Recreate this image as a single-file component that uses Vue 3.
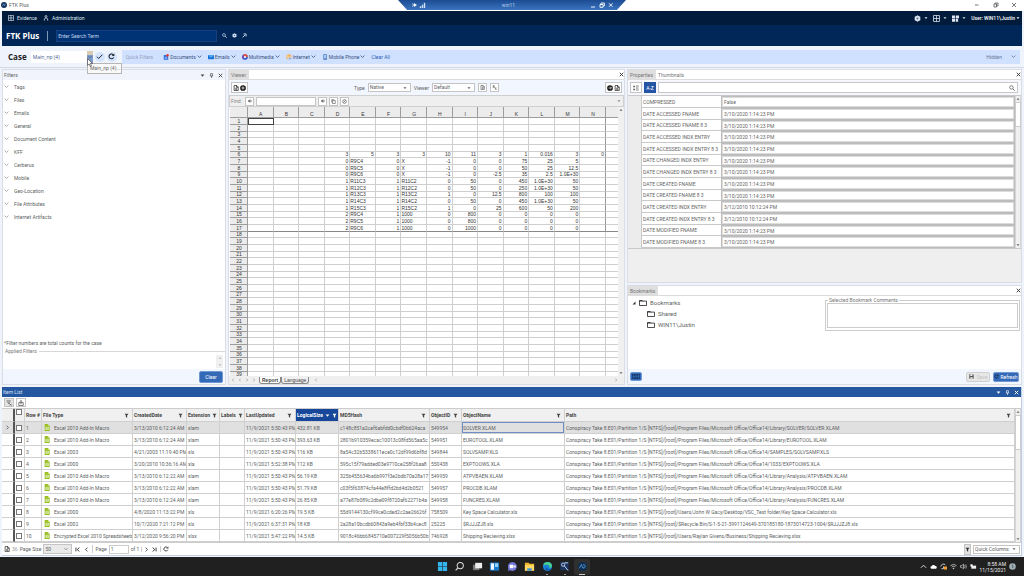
<script setup>
import { ref } from 'vue'

const filters = ['Tags', 'Files', 'Emails', 'General', 'Document Content', 'KFF', 'Cerberus', 'Mobile', 'Geo-Location', 'File Attributes', 'Internet Artifacts']
const quick = [
  { name: 'Documents', icon: 'docs' },
  { name: 'Emails', icon: 'mail' },
  { name: 'Multimedia', icon: 'media' },
  { name: 'Internet', icon: 'globe' },
  { name: 'Mobile Phone', icon: 'phone' },
]
const caseName = ref('Main_np (4)')
const page = ref('1')
const letters = 'ABCDEFGHIJKLMN'.split('')
const cells = {
  6: ['3', '5', '3', '3', '10', '11', '3', '1', '0.016', '3', '0'],
  7: ['0', 'R9C4', '0', 'X', '-1', '0', '0', '75', '25', '5', ''],
  8: ['0', 'R9C5', '0', 'X', '-1', '0', '0', '50', '25', '12.5', ''],
  9: ['0', 'R9C6', '0', 'X', '-1', '0', '-2.5', '35', '2.5', '1.0E+30', ''],
  10: ['1', 'R11C3', '1', 'R11C2', '0', '50', '0', '450', '1.0E+30', '50', ''],
  11: ['1', 'R12C3', '1', 'R12C2', '0', '50', '0', '250', '1.0E+30', '50', ''],
  12: ['1', 'R13C3', '1', 'R13C2', '1', '0', '12.5', '800', '100', '100', ''],
  13: ['1', 'R14C3', '1', 'R14C2', '0', '50', '0', '450', '1.0E+30', '50', ''],
  14: ['1', 'R15C3', '1', 'R15C2', '1', '0', '25', '600', '50', '200', ''],
  15: ['2', 'R9C4', '1', '1000', '0', '800', '0', '0', '0', '0', ''],
  16: ['2', 'R9C5', '1', '1000', '0', '800', '0', '0', '0', '0', ''],
  17: ['2', 'R9C6', '1', '1000', '0', '1000', '0', '0', '0', '0', ''],
}
const cell = (r, c) => (cells[r] && c > 2 ? cells[r][c - 3] : '')
const isText = (r, c) => r > 6 && (c === 4 || c === 6)

const d1 = '3/10/2020 1:14:23 PM'
const d2 = '3/12/2010 10:12:24 PM'
const props = [
  ['COMPRESSED', 'False'],
  ['DATE ACCESSED FNAME', d1],
  ['DATE ACCESSED FNAME 8 3', d1],
  ['DATE ACCESSED INDX ENTRY', d1],
  ['DATE ACCESSED INDX ENTRY 8 3', d1],
  ['DATE CHANGED INDX ENTRY', d1],
  ['DATE CHANGED INDX ENTRY 8 3', d1],
  ['DATE CREATED FNAME', d1],
  ['DATE CREATED FNAME 8 3', d1],
  ['DATE CREATED INDX ENTRY', d2],
  ['DATE CREATED INDX ENTRY 8 3', d2],
  ['DATE MODIFIED FNAME', d1],
  ['DATE MODIFIED FNAME 8 3', d1],
]

const cols = [
  { t: 'Row #', c: 'w-row', f: false },
  { t: 'File Type', c: 'w-type', f: true },
  { t: 'CreatedDate', c: 'w-created', f: true },
  { t: 'Extension', c: 'w-ext', f: true },
  { t: 'Labels', c: 'w-labels', f: true },
  { t: 'LastUpdated', c: 'w-updated', f: true },
  { t: 'LogicalSize', c: 'w-size', f: true, sorted: true },
  { t: 'MD5Hash', c: 'w-md5', f: true },
  { t: 'ObjectID', c: 'w-id', f: true },
  { t: 'ObjectName', c: 'w-name', f: true },
  { t: 'Path', c: 'w-path', f: true },
]
const root = 'Conspiracy Take 8.E01/Partition 1/S [NTFS]/[root]/'
const office = root + 'Program Files/Microsoft Office/Office14/'
const items = [
  ['Excel 2010 Add-In Macro', '3/13/2010 6:12:24 AM', 'xlam', '11/9/2021 5:50:43 PM', '432.81 KB', 'c148c851a2cef6abfdd0cbdf0b624aca', '549954', 'SOLVER.XLAM', office + 'Library/SOLVER/SOLVER.XLAM'],
  ['Excel 2010 Add-In Macro', '3/13/2010 6:12:24 AM', 'xlam', '11/9/2021 5:50:43 PM', '393.63 KB', '2801b910359ecac10013c08fd565aa5c', '549951', 'EUROTOOL.XLAM', office + 'Library/EUROTOOL.XLAM'],
  ['Excel 2003', '4/21/2003 11:19:40 PM', 'xls', '11/9/2021 5:50:43 PM', '116 KB', '8a54c32b5338611ece0c12df99d6bf8d', '549844', 'SOLVSAMP.XLS', office + 'SAMPLES/SOLVSAMP.XLS'],
  ['Excel 2000', '3/20/2010 10:36:16 AM', 'xla', '11/9/2021 5:52:38 PM', '112 KB', '595c15f79added03e9710ce258f26aa8', '550438', 'EXPTOOWS.XLA', office + '1033/EXPTOOWS.XLA'],
  ['Excel 2010 Add-In Macro', '3/13/2010 6:12:22 AM', 'xlam', '11/9/2021 5:50:43 PM', '56.19 KB', '325b455634ba6b997f3e2bdb70a28a17', '549959', 'ATPVBAEN.XLAM', office + 'Library/Analysis/ATPVBAEN.XLAM'],
  ['Excel 2010 Add-In Macro', '3/13/2010 6:12:22 AM', 'xlam', '11/9/2021 5:50:43 PM', '51.79 KB', 'c03f5f63874cfa44e8ffd2bd4d2b0521', '549957', 'PROCDB.XLAM', office + 'Library/Analysis/PROCDB.XLAM'],
  ['Excel 2010 Add-In Macro', '3/13/2010 6:12:24 AM', 'xlam', '11/9/2021 5:50:43 PM', '26.85 KB', 'a77e87b089c2dbe09f8720af62271b4a', '549958', 'FUNCRES.XLAM', office + 'Library/Analysis/FUNCRES.XLAM'],
  ['Excel 2000', '4/8/2020 11:13:22 PM', 'xls', '11/9/2021 6:20:26 PM', '19.5 KB', '55d9144130cf99ce0cded2c2ae26626f', '758509', 'Key Space Calculator.xls', root + 'Users/John W Gacy/Desktop/VSC_Test folder/Key Space Calculator.xls'],
  ['Excel 2002', '10/7/2020 7:21:12 PM', 'xls', '11/9/2021 6:37:31 PM', '18 KB', '2a28a10bcdb60843a9eb4fbf33b4cec8', '25225', '$RJJJZJ8.xls', root + '$Recycle.Bin/S-1-5-21-3991124649-370185180-1873014723-1004/$RJJJZJ8.xls'],
  ['Encrypted Excel 2010 Spreadsheets', '3/12/2020 9:56:20 PM', 'xlsx', '11/9/2021 5:47:22 PM', '14.5 KB', '9018c46bb6845710e007229f5056b50b', '746928', 'Shipping Recieving.xlsx', root + 'Users/Raylan Givens/Business/Shipping Recieving.xlsx'],
]
</script>

<template>
  <div class="screen">
    <svg class="defs" aria-hidden="true">
      <symbol id="chev" viewBox="0 0 8 8"><path d="M1 2.5 4 5.5 7 2.5" fill="none" stroke="currentColor" stroke-width="1.3" /></symbol>
      <symbol id="left" viewBox="0 0 8 8"><path d="M5.5 1 2.5 4 5.5 7" fill="none" stroke="currentColor" stroke-width="1.4" /></symbol>
      <symbol id="right" viewBox="0 0 8 8"><path d="M2.5 1 5.5 4 2.5 7" fill="none" stroke="currentColor" stroke-width="1.4" /></symbol>
      <symbol id="first" viewBox="0 0 8 8"><path d="M1.5 1V7M7 1 3.5 4 7 7" fill="none" stroke="currentColor" stroke-width="1.5" /></symbol>
      <symbol id="last" viewBox="0 0 8 8"><path d="M6.5 1V7M1 1 4.5 4 1 7" fill="none" stroke="currentColor" stroke-width="1.5" /></symbol>
      <symbol id="back" viewBox="0 0 8 8"><path d="M7.5 4H1M4 1 1 4 4 7" fill="none" stroke="currentColor" stroke-width="1.8" /></symbol>
      <symbol id="down" viewBox="0 0 8 8"><path d="M1 2.5H7L4 6Z" fill="currentColor" /></symbol>
      <symbol id="up" viewBox="0 0 8 8"><path d="M1 5.5H7L4 2Z" fill="currentColor" /></symbol>
      <symbol id="caret" viewBox="0 0 8 8"><path d="M1 5.5 4 2.5 7 5.5" fill="none" stroke="currentColor" stroke-width="1.1" /></symbol>
      <symbol id="x" viewBox="0 0 8 8"><path d="M1.2 1.2 6.8 6.8M6.8 1.2 1.2 6.8" stroke="currentColor" stroke-width="1.5" /></symbol>
      <symbol id="pin" viewBox="0 0 8 8"><path d="M2.5 1H5.5V4.5M2.5 1V4.5M1.3 4.7H6.7M4 4.7V8" fill="none" stroke="currentColor" stroke-width="1" /></symbol>
      <symbol id="check" viewBox="0 0 8 8"><path d="M1 4.3 3 6.3 7.2 2" fill="none" stroke="currentColor" stroke-width="1.1" /></symbol>
      <symbol id="reload" viewBox="0 0 8 8"><path d="M6.4 5A2.7 2.7 0 1 1 6 2.2" fill="none" stroke="currentColor" stroke-width="1.2" /><path d="M7.2 .6V3.4H4.4Z" fill="currentColor" /></symbol>
      <symbol id="search" viewBox="0 0 8 8"><circle cx="3.2" cy="3.2" r="2.3" fill="none" stroke="currentColor" /><path d="M5 5 7.5 7.5" stroke="currentColor" stroke-width="1.3" /></symbol>
      <symbol id="doc" viewBox="0 0 8 8"><path d="M1.5 .7H5L7 2.7V7.3H1.5ZM4.7 .7V3H7M3 4.3H5.5M3 5.8H5.5" fill="none" stroke="currentColor" stroke-width=".9" /></symbol>
      <symbol id="plus" viewBox="0 0 8 8"><circle cx="4" cy="4" r="3.8" fill="currentColor" /><path d="M4 1.8V6.2M1.8 4H6.2" stroke="#fff" stroke-width="1" /></symbol>
      <symbol id="arrowc" viewBox="0 0 8 8"><circle cx="4" cy="4" r="3.8" fill="currentColor" /><path d="M1.8 4H6M4.2 2.2 6 4 4.2 5.8" fill="none" stroke="#fff" stroke-width=".9" /></symbol>
      <symbol id="funnel" viewBox="0 0 8 8"><path d="M.8 1H7.2L5 4V7.5L3 6.5V4Z" fill="currentColor" /></symbol>
      <symbol id="folder" viewBox="0 0 16 12"><path d="M1 2.2H15V11H1ZM1 3V1H6.5L8 2.5" fill="none" stroke="currentColor" stroke-width="1.6" /></symbol>
      <symbol id="grid" viewBox="0 0 8 8"><path d="M.6 .6H7.4V7.4H.6ZM4 .6V7.4M.6 4H7.4" fill="none" stroke="currentColor" stroke-width=".9" /></symbol>
      <symbol id="tiles" viewBox="0 0 8 8"><path d="M0 .5H3.6V3.7H0ZM4.4 .5H8V3.7H4.4ZM0 4.4H3.6V7.6H0ZM4.4 4.4H7V7.6H4.4Z" fill="currentColor" /></symbol>
      <symbol id="gear" viewBox="0 0 8 8"><path d="M4 .3 5.3 1.2 7.2 2V6L5.3 6.8 4 7.7 2.7 6.8 .8 6V2L2.7 1.2Z" fill="currentColor" /><circle cx="4" cy="4" r="1.2" fill="#5d7390" /></symbol>
      <symbol id="copy" viewBox="0 0 8 8"><path d="M2.5 2.5H6.8V7.3H2.5ZM1.2 5.5V1H5" fill="none" stroke="currentColor" stroke-width=".9" /></symbol>
      <symbol id="ban" viewBox="0 0 8 8"><circle cx="4" cy="4" r="2.9" fill="none" stroke="currentColor" /><path d="M2.5 5.5 5.5 2.5" stroke="currentColor" /></symbol>
      <symbol id="swap" viewBox="0 0 8 8"><path d="M1 1.5H4.5M2.7 .5V3.5M1 5 3 2.5M3.5 3.5 7 7.3M4.5 6.5H7M5.5 3.5 7 5" fill="none" stroke="currentColor" stroke-width=".9" /></symbol>
      <symbol id="list" viewBox="0 0 8 8"><path d="M.5 1H2.5V3H.5ZM.5 5H2.5V7H.5Z" fill="currentColor" /><path d="M4 1.2H7.5M4 2.8H7.5M4 5.2H7.5M4 6.8H7.5" stroke="currentColor" stroke-width=".7" /></symbol>
      <symbol id="filterx" viewBox="0 0 8 8"><path d="M.5 1.2H6.5M1.5 3H5.5M2.7 4.8H5M5 5 7.5 7.5M7.5 5 5 7.5" fill="none" stroke="currentColor" stroke-width=".8" /></symbol>
      <symbol id="export" viewBox="0 0 8 8"><path d="M1 3.5H7V7.3H1ZM4 5.5V.8M2.5 2.2 4 .7 5.5 2.2" fill="none" stroke="currentColor" stroke-width=".9" /></symbol>
      <symbol id="docs" viewBox="0 0 8 8"><path d="M1 1.2H4.5L7 3.4V7.6H1Z" fill="#2f6fe0" /><path d="M2.3 4.3H5.6M2.3 5.8H5.6" stroke="#dfeaff" stroke-width=".7" /><circle cx="6" cy="1.8" r="1.7" fill="#e33b32" /></symbol>
      <symbol id="mail" viewBox="0 0 8 8"><rect y="1.2" width="8" height="5.8" rx=".6" fill="#1976d8" /><path d="M0 1.5 4 4.8 8 1.5" fill="#63b4f4" /></symbol>
      <symbol id="media" viewBox="0 0 8 8"><circle cx="4" cy="4" r="3.8" fill="#4263c9" /><path d="M4 4 1.3 1.3A3.8 3.8 0 0 1 7.8 4Z" fill="#e3523c" /><path d="M4 4 1 6.3A3.8 3.8 0 0 1 1.3 1.3Z" fill="#7a4bb0" /><circle cx="4" cy="4" r="1.4" fill="#fff" /></symbol>
      <symbol id="globe" viewBox="0 0 8 8"><circle cx="3.8" cy="4" r="3.6" fill="#f5a742" /><path d="M.4 3H7M2.6 .8Q1.5 4 2.6 7.2M3 4.5H7.8V7.8H3Z" fill="#8cb7ee" stroke="#fff" stroke-width=".5" /></symbol>
      <symbol id="phone" viewBox="0 0 8 8"><rect x="1.8" y=".3" width="4.8" height="7.4" rx=".7" fill="#3f6fb5" /><rect x="2.5" y="1.2" width="3.4" height="4.8" fill="#a9c9f3" /></symbol>
      <symbol id="xls" viewBox="0 0 10 12"><path d="M1 0H6.5L9.5 3V12H1Z" fill="#98bf1f" /><path d="M6.5 0 9.5 3H6.5Z" fill="#d8e8a0" /><path d="M3 5.5H7.5V9.5H3ZM3 7.5H7.5" fill="none" stroke="#fff" stroke-width=".9" /></symbol>
    </svg>

    <header class="titlebar">
      <svg class="logo" viewBox="0 0 8 8"><circle cx="4" cy="4" r="4" fill="#12335e" /><path d="M1.8 5.5 3.6 2.3 5 5.5M5 3H6.4" fill="none" stroke="#8fb4e0" stroke-width=".8" /></svg>
      <span>FTK Plus</span>
      <div class="rdp">
        <svg class="rdp-l" viewBox="0 0 14 6"><path d="M0 1V5M1 3H4M2 1.5 4.5 3 2 4.5Z" fill="#fff" stroke="#fff" stroke-width=".6" /><path d="M8 6V4.5H9V6ZM10 6V3H11V6ZM12 6V1H13V6Z" fill="#d4e2f5" stroke="#d4e2f5" stroke-width=".4" /></svg>
        <span>win11</span>
        <svg class="rdp-r" viewBox="0 0 22 6"><path d="M0 5H4M9 2.5H12V5.3H9ZM10 2.3V1H13.3V4H12M18 1.3 21.5 4.8M21.5 1.3 18 4.8" fill="none" stroke="#fff" stroke-width=".9" /></svg>
      </div>
      <svg class="winbtns" viewBox="0 0 42 6"><path d="M1 3H4.5M20 2H22.5V5H20ZM21 2V1H24V4H22.5M38 1 42 5M42 1 38 5" fill="none" stroke="#555" stroke-width=".8" /></svg>
    </header>

    <nav class="menubar">
      <a href="#"><svg class="i6"><use href="#grid" /></svg>Evidence</a>
      <a href="#"><svg class="i6" viewBox="0 0 8 8"><circle cx="4" cy="2" r="1.3" fill="none" stroke="currentColor" /><path d="M1.8 7.5V5L4 3.8 6.2 5V7.5" fill="none" stroke="currentColor" /></svg>Administration</a>
      <div class="menu-right">
        <button aria-label="Settings"><svg class="i7"><use href="#gear" /></svg><svg class="i4"><use href="#down" /></svg></button>
        <button aria-label="Layout"><svg class="i7"><use href="#grid" /></svg><svg class="i4"><use href="#down" /></svg></button>
        <button aria-label="Tiles"><svg class="i7"><use href="#tiles" /></svg><svg class="i4"><use href="#down" /></svg></button>
        <button class="user">User: WIN11\Justin<svg class="i4"><use href="#down" /></svg></button>
      </div>
    </nav>

    <div class="brandbar">
      <h1>FTK Plus</h1>
      <i class="bar"></i>
      <input class="term" aria-label="Search term" placeholder="Enter Search Term" />
      <button aria-label="Search"><svg class="i5"><use href="#search" /></svg></button>
      <button aria-label="Options"><svg class="i5"><use href="#gear" /></svg></button>
      <button aria-label="Open"><svg class="i5" viewBox="0 0 8 8"><path d="M1 7 5 3M2.5 1.5H6.5V5.5" fill="none" stroke="currentColor" stroke-width="1.5" /></svg></button>
    </div>

    <div class="casebar">
      <label class="case-label" for="case">Case</label>
      <input id="case" v-model="caseName" />
      <button class="case-drop" aria-label="Choose case"><svg class="i4"><use href="#chev" /></svg></button>
      <button class="round" aria-label="Apply"><svg class="i7"><use href="#check" /></svg></button>
      <button class="round" aria-label="Reload"><svg class="i7"><use href="#reload" /></svg></button>
      <div class="quick">
        <span class="quick-title">Quick Filters</span>
        <button v-for="q in quick" :key="q.name"><svg class="i6"><use :href="'#' + q.icon" /></svg>{{ q.name }}<svg class="i5"><use href="#chev" /></svg></button>
        <a href="#">Clear All</a>
        <button class="hidden-btn">Hidden<svg class="i5"><use href="#chev" /></svg></button>
      </div>
      <div class="tooltip">Main_np (4)...</div>
      <svg class="cursor" viewBox="0 0 6 9"><path d="M.5 .5V7.5L2.2 6 3.3 8.5 4.4 8 3.4 5.5H5.5Z" fill="#fff" stroke="#333" stroke-width=".6" /></svg>
    </div>

    <main class="work">
      <section class="panel filters">
        <div class="panel-head"><span>Filters</span>
          <div class="head-icons"><svg class="i5"><use href="#down" /></svg><svg class="i5"><use href="#pin" /></svg><svg class="i5"><use href="#x" /></svg></div>
        </div>
        <ul class="flist"><li v-for="f in filters" :key="f"><button><svg class="i5"><use href="#chev" /></svg>{{ f }}</button></li></ul>
        <p class="note">*Filter numbers are total counts for the case</p>
        <fieldset class="applied"><legend>Applied Filters</legend><div class="updown"><svg class="i4"><use href="#up" /></svg><svg class="i4"><use href="#down" /></svg></div></fieldset>
        <div class="panel-foot"><button class="primary clear">Clear</button></div>
      </section>

      <section class="panel viewer">
        <div class="tabs"><button class="tab on">Viewer</button><svg class="i5 close"><use href="#x" /></svg></div>
        <div class="vtools">
          <button class="box wide" aria-label="Add"><svg class="i6"><use href="#doc" /></svg><svg class="i6"><use href="#plus" /></svg></button>
          <div class="vmid">
            <label for="type">Type</label>
            <span class="sel"><select id="type"><option>Native</option></select><svg class="i4"><use href="#down" /></svg></span>
            <label for="view">Viewer</label>
            <span class="sel"><select id="view"><option>Default</option></select><svg class="i4"><use href="#down" /></svg></span>
            <button class="box" aria-label="Document"><svg class="i5"><use href="#doc" /></svg></button>
            <button class="box" aria-label="Translate"><svg class="i5"><use href="#swap" /></svg></button>
          </div>
          <button class="box wide" aria-label="Send"><svg class="i6"><use href="#arrowc" /></svg><svg class="i6"><use href="#doc" /></svg></button>
        </div>
        <div class="find">
          <label for="find">Find:</label>
          <button class="box" aria-label="Previous"><svg class="i4"><use href="#back" /></svg></button>
          <input id="find" />
          <button class="box" aria-label="Next"><svg class="i4"><use href="#back" /></svg></button>
          <button class="box" aria-label="Copy"><svg class="i5"><use href="#copy" /></svg></button>
          <button class="box" aria-label="Stop"><svg class="i5"><use href="#ban" /></svg></button>
          <svg class="i4 more"><use href="#down" /></svg>
        </div>
        <div class="sheetwrap">
          <div class="sheetclip">
            <table class="sheet">
              <thead><tr><th class="rh"></th><th v-for="l in letters" :key="l">{{ l }}</th><th class="tail"></th></tr></thead>
              <tbody>
                <tr v-for="r in 39" :key="r" :class="{ end: r === 17 }">
                  <th>{{ r }}</th>
                  <td v-for="(l, c) in letters" :key="l" :class="{ txt: isText(r, c), cur: r === 1 && c === 0, edge: c === 13 && r < 18 }">{{ cell(r, c) }}</td>
                  <td class="tail"></td>
                </tr>
              </tbody>
            </table>
          </div>
          <div class="vscroll plain"><svg class="i4"><use href="#up" /></svg><svg class="i4"><use href="#down" /></svg></div>
        </div>
        <div class="sheettabs">
          <svg class="i4"><use href="#left" /></svg><svg class="i4"><use href="#left" /></svg><svg class="i4"><use href="#right" /></svg><svg class="i4"><use href="#right" /></svg>
          <button class="stab on">Report</button><button class="stab">Language</button>
          <svg class="i4"><use href="#left" /></svg><svg class="i4 far"><use href="#right" /></svg>
        </div>
      </section>

      <div class="side">
        <section class="panel properties">
          <div class="tabs"><button class="tab on">Properties</button><button class="tab">Thumbnails</button><svg class="i5 close"><use href="#x" /></svg></div>
          <div class="ptools">
            <button class="box" aria-label="Categories"><svg class="i6"><use href="#list" /></svg></button>
            <button class="az">A-Z</button>
            <div class="psearch"><input aria-label="Search properties" /><svg class="i6"><use href="#search" /></svg></div>
          </div>
          <div class="pgrid">
            <div class="gutter"></div>
            <table class="ptable"><tbody><tr v-for="p in props" :key="p[0]"><th>{{ p[0] }}</th><td>{{ p[1] }}</td></tr></tbody></table>
            <div class="vscroll"><svg class="i4"><use href="#up" /></svg><i class="thumb"></i><svg class="i4"><use href="#down" /></svg></div>
          </div>
        </section>
        <section class="panel bookmarks">
          <div class="tabs"><button class="tab on">Bookmarks</button><svg class="i5 close"><use href="#x" /></svg></div>
          <div class="bbody">
            <ul class="tree">
              <li><svg class="tri" viewBox="0 0 4 4"><path d="M3.5 .5V3.5H.5Z" fill="#333" /></svg><svg class="folder"><use href="#folder" /></svg>Bookmarks</li>
              <li class="sub"><svg class="folder"><use href="#folder" /></svg>Shared</li>
              <li class="sub"><svg class="folder"><use href="#folder" /></svg>WIN11\Justin</li>
            </ul>
            <fieldset class="comments"><legend>Selected Bookmark Comments</legend><textarea aria-label="Selected Bookmark Comments"></textarea></fieldset>
          </div>
          <div class="panel-foot">
            <button class="primary kb" aria-label="Keyboard"><svg viewBox="0 0 10 6"><path d="M.5 .5H9.5V5.5H.5ZM2 2H8M2 4H8" fill="none" stroke="#0d2448" stroke-dasharray="1.5 .5" /></svg></button>
            <button class="save" disabled><svg class="i5" viewBox="0 0 8 8"><path d="M.5 .5H6.5L7.5 1.5V7.5H.5Z" fill="#555" /><path d="M2 .5H5.5V3H2ZM2 5H6V7.5H2Z" fill="#eee" /></svg>Save</button>
            <button class="primary refresh"><svg class="i5"><use href="#reload" /></svg>Refresh</button>
          </div>
        </section>
      </div>
    </main>

    <section class="itemlist">
      <div class="ihead"><span>Item List</span><div class="head-icons"><svg class="i5"><use href="#down" /></svg><svg class="i5"><use href="#pin" /></svg><svg class="i5"><use href="#x" /></svg></div></div>
      <div class="itools"><button class="box shade" aria-label="Clear filter"><svg class="i6"><use href="#filterx" /></svg></button><button class="box" aria-label="Export"><svg class="i6"><use href="#export" /></svg></button></div>
      <div class="igrid">
        <table class="items">
          <thead>
            <tr>
              <th class="w-mark"></th>
              <th class="w-check"><input type="checkbox" aria-label="Select all" /></th>
              <th v-for="c in cols" :key="c.t" :class="[c.c, { sorted: c.sorted }]"><div class="th">{{ c.t }}<svg v-if="c.sorted" class="i5 push"><use href="#down" /></svg><svg v-if="c.f" class="i5" :class="{ push: !c.sorted }"><use href="#funnel" /></svg></div></th>
            </tr>
          </thead>
          <tbody>
            <tr v-for="(r, n) in items" :key="n" :class="{ picked: n === 0 }">
              <td class="mark"><svg v-if="n === 0" class="i5"><use href="#right" /></svg></td>
              <td class="chk"><input type="checkbox" :aria-label="'Select row ' + (n + 1)" /></td>
              <td>{{ n + 1 }}</td>
              <td><div class="ft"><svg class="xls"><use href="#xls" /></svg>{{ r[0] }}</div></td>
              <td>{{ r[1] }}</td>
              <td>{{ r[2] }}</td>
              <td></td>
              <td>{{ r[3] }}</td>
              <td>{{ r[4] }}</td>
              <td>{{ r[5] }}</td>
              <td>{{ r[6] }}</td>
              <td :class="{ focus: n === 0 }">{{ r[7] }}</td>
              <td>{{ r[8] }}</td>
            </tr>
          </tbody>
        </table>
        <div class="vscroll"><svg class="i4"><use href="#up" /></svg><i class="thumb long"></i><svg class="i4"><use href="#down" /></svg></div>
      </div>
      <div class="pager">
        <svg class="i6 dark"><use href="#doc" /></svg><span class="faint">36</span>
        <label for="psize">Page Size</label>
        <span class="sel grey"><select id="psize"><option>50</option></select><svg class="i4"><use href="#chev" /></svg></span>
        <button aria-label="First page"><svg class="i5"><use href="#first" /></svg></button>
        <button aria-label="Previous page"><svg class="i5"><use href="#left" /></svg></button>
        <label for="page" class="sep">Page</label>
        <input id="page" v-model="page" />
        <span>of 1</span>
        <button class="sep" aria-label="Next page"><svg class="i5"><use href="#right" /></svg></button>
        <button aria-label="Last page"><svg class="i5"><use href="#last" /></svg></button>
        <button class="sep" aria-label="Reload list"><svg class="i6"><use href="#reload" /></svg></button>
        <button class="box shade fbtn" aria-label="Filter columns"><svg class="i5"><use href="#funnel" /></svg></button>
        <span class="sel qc"><select aria-label="Quick Columns"><option>Quick Columns:</option></select><svg class="i4"><use href="#down" /></svg></span>
      </div>
    </section>

    <footer class="taskbar">
      <div class="apps">
        <button aria-label="Start"><svg viewBox="0 0 12 12"><path d="M1 1H5.7V5.7H1ZM6.3 1H11V5.7H6.3ZM1 6.3H5.7V11H1ZM6.3 6.3H11V11H6.3Z" fill="#35b5ee" /></svg></button>
        <button aria-label="Search"><svg viewBox="0 0 12 12"><circle cx="6.8" cy="5" r="3.4" fill="none" stroke="#ddd" stroke-width="1.1" /><path d="M4.3 7.5 1.8 10.3" stroke="#ddd" stroke-width="1.3" /></svg></button>
        <button aria-label="Task view"><svg viewBox="0 0 12 12"><rect x="1" y="4" width="7" height="6" fill="#777" /><rect x="3.5" y="2" width="7.5" height="6" fill="#eee" /></svg></button>
        <button aria-label="Widgets"><svg viewBox="0 0 12 12"><rect x="1" y="1.5" width="10" height="9" rx="1" fill="#1877c9" /><rect x="2" y="2.5" width="3.5" height="7" fill="#f2f8ff" /><rect x="6.5" y="2.5" width="3.5" height="4" fill="#8fd3f8" /></svg></button>
        <button aria-label="Chat"><svg viewBox="0 0 12 12"><path d="M6 1A5 5 0 1 1 3 10.2L1 11 1.5 8A5 5 0 0 1 6 1Z" fill="#7378d8" /><rect x="3" y="4" width="4" height="4" rx=".6" fill="#fff" /><path d="M7.5 5.5 9.3 4.3V7.7L7.5 6.5Z" fill="#fff" /></svg></button>
        <button aria-label="Explorer"><svg viewBox="0 0 12 12"><path d="M1 2H5L6 3H11V10.5H1Z" fill="#f3b62b" /><path d="M1 4.5H11V10.5H1Z" fill="#ffd766" /><path d="M3.5 8H8.5V10.5H3.5Z" fill="#3b93d8" /></svg></button>
        <button aria-label="Edge"><svg viewBox="0 0 12 12"><circle cx="6" cy="6" r="5" fill="#1a7fd4" /><path d="M1.2 5A5 5 0 0 1 11 5.5Q11 7.5 8 7.5 8.5 4.5 5.5 4.2 3 4 1.2 5Z" fill="#45cf8f" /><path d="M5 6.5Q5 9.5 9.5 9.3 7 11 4.5 9.8 3 8 5 6.5Z" fill="#0d4f9a" /></svg><i></i></button>
        <button aria-label="Tool"><svg viewBox="0 0 12 12"><rect x="1.5" y="1" width="9" height="9" fill="#1c355f" /><circle cx="4.5" cy="4" r="1.8" fill="none" stroke="#c9dcf5" stroke-width=".9" /><path d="M5.5 5 10 10.5M6 2H10" stroke="#c9dcf5" stroke-width="1" /></svg><i></i></button>
        <button class="active" aria-label="FTK Plus"><svg viewBox="0 0 12 12"><circle cx="6" cy="6" r="5" fill="#0f2d50" /><path d="M2.5 8 4.8 3.8 6.5 8M6.5 4Q9.5 4 9 6.2 8.5 8 6.5 7.5" fill="none" stroke="#5f9fdf" stroke-width=".9" /></svg><i class="lit"></i></button>
      </div>
      <div class="tray">
        <svg><use href="#caret" /></svg>
        <svg viewBox="0 0 8 8"><path d="M1.5 6.5A1.5 1.5 0 0 1 1.8 3.6 2.3 2.3 0 0 1 6 3.5 1.5 1.5 0 0 1 6.5 6.5Z" fill="#fff" /></svg>
        <svg viewBox="0 0 8 8"><path d="M1 4A3 3 0 0 1 6 2M1.5 6.5H4V4" fill="none" stroke="#ddd" /><rect x="4.5" y="4" width="3.5" height="3.5" fill="#f29a2e" /></svg>
        <svg viewBox="0 0 8 8"><path d="M.5 3Q4 0 7.5 3M2 4.5Q4 2.8 6 4.5" fill="none" stroke="#ccc" stroke-width=".9" /><circle cx="4" cy="6.2" r=".9" fill="#ccc" /></svg>
        <svg viewBox="0 0 8 8"><path d="M.5 3H2L4 1.3V6.7L2 5H.5Z" fill="none" stroke="#ccc" stroke-width=".8" /><path d="M5.2 2.5Q6.2 4 5.2 5.5M6.5 1.5Q8 4 6.5 6.5" fill="none" stroke="#ccc" stroke-width=".8" /></svg>
        <svg viewBox="0 0 8 8"><path d="M1.5 3H7V6.5H1.5Z" fill="#eee" /><path d="M.5 1.5H3V4H.5Z" fill="#fff" /></svg>
        <div class="clock"><span>8:58 AM</span><span>11/15/2021</span></div>
        <svg viewBox="0 0 8 8"><circle cx="4" cy="4" r="3.7" fill="#9fb0b8" /><path d="M3.3 2.5H4.3V5.8" fill="none" stroke="#333" stroke-width=".7" /></svg>
      </div>
    </footer>
  </div>
</template>

<style>
html, body { margin: 0; }
</style>

<style scoped>
* { box-sizing: border-box; }
.screen { height: 100vh; display: flex; flex-direction: column; overflow: hidden; background: #eff3fb; color: #5c5f63; font: 5px/8px Roboto, "Open Sans", sans-serif; }
.defs { display: none; }
svg { display: block; flex: none; }
button, input, select, textarea { font: inherit; color: inherit; margin: 0; padding: 0; border: 0; background: none; border-radius: 0; min-width: 0; outline: 0; }
button { display: flex; align-items: center; justify-content: center; white-space: nowrap; }
a { color: inherit; text-decoration: none; }
ul { list-style: none; margin: 0; padding: 0; }
select { appearance: none; width: 100%; }
.i4 { width: 4px; height: 4px; }
.i5 { width: 5px; height: 5px; }
.i6 { width: 6px; height: 6px; }
.i7 { width: 7px; height: 7px; }

.titlebar { position: relative; height: 11px; flex: none; display: flex; align-items: center; gap: 2px; padding: 0 8px 2px 1px; background: #fff; }
.logo { width: 6px; height: 6px; }
.winbtns { width: 42px; height: 6px; margin-left: auto; }
.rdp { position: absolute; left: 50%; top: 0; transform: translateX(-50%); width: 228px; height: 10px; display: flex; align-items: center; justify-content: space-between; padding: 0 13px 0 14px; color: #b9cdea; background: linear-gradient(#1c4c93, #3a74bf); clip-path: polygon(0 0, 100% 0, 96% 100%, 4% 100%); }
.rdp-l { width: 14px; height: 6px; }
.rdp-r { width: 22px; height: 6px; }

.menubar, .brandbar, .casebar { font-family: "Open Sans", "Noto Sans", sans-serif; }
.menubar { height: 14px; flex: none; margin: 0 2px; display: flex; align-items: center; gap: 6px; padding: 0 2px 0 6px; background: #001b3c; color: #dde6f2; }
.menubar a { display: flex; align-items: center; gap: 3px; font-family: Roboto, sans-serif; }
.menu-right { margin-left: auto; display: flex; gap: 5px; }
.menu-right button { gap: 3px; }
.menu-right .user { gap: 1px; font-family: Roboto, sans-serif; font-weight: 500; color: #fff; }
.brandbar { height: 21px; flex: none; margin: 0 2px; display: flex; align-items: center; gap: 5px; padding: 0 4px; background: #002758; color: #cfe0f6; }
.brandbar h1 { margin: 0; font-size: 8px; font-weight: 700; color: #fff; }
.bar { width: 1px; height: 10px; background: #7f97b8; margin: 0 3px 0 3px; }
.term { width: 161px; height: 12px; padding: 0 1px; background: #003376; border: 1px solid #14417d; font-family: Roboto, sans-serif; }
.term::placeholder { color: #c3d4ec; opacity: 1; }

.casebar { position: relative; height: 22px; flex: none; display: flex; align-items: center; padding: 0 4px 0 8px; margin-bottom: 1px; border-bottom: 1px solid #d5d9e2; }
.case-label { font-size: 8px; font-weight: 700; color: #222; margin-right: 4px; }
#case { width: 56px; height: 12px; padding: 0 2px; background: #fff; color: #3d5a8c; }
.case-drop { width: 6px; height: 12px; background: linear-gradient(#d8cdb4 30%, #7f9cc8 30%); color: #2c4c80; }
.round { width: 10px; height: 10px; margin-left: 2px; border-radius: 5px; background: #d3e3fd; color: #222; }
.quick { flex: 1; height: 14px; margin-left: 5px; display: flex; align-items: center; gap: 6px; padding: 0 4px; background: #d0e1ff; color: #38527d; font-family: Roboto, sans-serif; }
.quick button { gap: 1px; }
.quick-title { color: #93a2bd; margin-right: 4px; }
.quick a { color: #2c5fb4; }
.quick .hidden-btn { margin-left: auto; gap: 9px; color: #697a96; }
.tooltip { position: absolute; left: 87px; top: 17px; width: 35px; height: 11px; padding: 0 2px; line-height: 9px; border: 1px solid #b5b5b5; background: #fafafa; color: #666; white-space: nowrap; z-index: 2; font-family: Roboto, sans-serif; }
.cursor { position: absolute; left: 87px; top: 12px; width: 6px; height: 9px; z-index: 3; }

.work { flex: 1; min-height: 0; display: grid; grid-template-columns: 224fr 397fr 395fr; grid-template-rows: minmax(0, 1fr); gap: 2px; padding: 0 2px 2px; }
.panel { display: flex; flex-direction: column; min-width: 0; background: #fff; border: 1px solid #dadde3; overflow: hidden; }
.panel-head { height: 10px; flex: none; display: flex; align-items: center; justify-content: space-between; padding: 0 2px 0 1px; background: #f1f4fc; }
.head-icons { display: flex; gap: 4px; color: #444; }
.flist { flex: 1; }
.flist li { height: 13px; display: flex; align-items: center; }
.flist button { gap: 5px; padding-left: 1px; }
.flist svg { color: #999; }
.note { margin: 0; padding-left: 1px; }
.applied { margin: 0; height: 22px; padding: 0 2px 0 0; border: 0; border-top: 1px solid #d8d8d8; display: flex; justify-content: flex-end; }
.applied legend { padding: 0 2px; color: #777; }
.updown { width: 7px; height: 13px; display: flex; flex-direction: column; justify-content: space-around; align-items: center; background: #f0f0f0; color: #bbb; }
.panel-foot { height: 15px; flex: none; display: flex; align-items: center; gap: 3px; padding: 0 2px; background: #f2f6fe; }
.primary { background: #3469b8; color: #fff; border-radius: 2px; border: 1px solid #6f97d4; }
.clear { width: 24px; height: 12px; margin-left: auto; }

.tabs { height: 10px; flex: none; display: flex; align-items: stretch; border-bottom: 1px solid #dcdcdc; }
.tab { padding: 0 3px 0 2px; color: #777; }
.tab.on { background: #dfdfdf; }
.close { margin: 2px 0 0 auto; color: #333; }
.box { width: 9px; height: 9px; background: #fff; border: 1px solid #c4c4c4; color: #444; flex: none; }
.box.wide { width: 17px; height: 11px; gap: 1px; color: #111; }
.box.shade { background: #e2e2e2; }
.vtools { height: 15px; flex: none; display: flex; align-items: center; justify-content: space-between; padding: 0 2px; background: #f2f6fe; }
.vmid { display: flex; align-items: center; gap: 3px; }
.sel { position: relative; width: 43px; height: 9px; display: flex; align-items: center; background: #fff; border: 1px solid #c4c4c4; padding: 0 3px 0 1px; }
.sel select { flex: 1; line-height: 7px; height: 7px; }
.find { height: 12px; flex: none; display: flex; align-items: center; gap: 2px; padding: 0 2px 0 1px; background: #efefef; border: 1px solid #cfcfcf; color: #888; }
.find input { width: 60px; height: 9px; background: #fff; border: 1px solid #c4c4c4; }
.find label { width: 12px; }
.more { margin-left: auto; }
.sheetwrap { flex: 1; min-height: 0; display: flex; padding-left: 1px; }
.sheetclip { flex: 1; min-width: 0; overflow: hidden; }
.sheet { width: 100%; table-layout: fixed; border-collapse: separate; border-spacing: 0; font: 5px/6px "Liberation Sans", Arial, sans-serif; color: #333; }
.sheet th, .sheet td { height: 7px; padding: 0 1px 0 2px; border-right: 1px solid #cfcfcf; border-bottom: 1px solid #cfcfcf; text-align: right; line-height: 6px; font-weight: 400; white-space: nowrap; overflow: hidden; }
.sheet tbody tr:nth-child(3n) th, .sheet tbody tr:nth-child(3n) td { height: 6px; line-height: 5px; }
.sheet td.txt { text-align: left; padding-left: 0; }
.sheet th { background: #ececec; text-align: center; border-color: #9c9c9c; }
.sheet thead th { height: 11px; vertical-align: bottom; }
.sheet .rh { width: 18px; }
.sheet .tail { width: 12px; border-right: 0; }
.sheet tr.end td { border-bottom-color: #888; }
.sheet td.edge { border-right-color: #999; }
.sheet td.cur { border: 1px solid #444; }
.vscroll { position: relative; width: 6px; flex: none; display: flex; flex-direction: column; justify-content: space-between; align-items: center; padding: 1px 0; background: #f0f0f0; border: 1px solid #d5d5d5; border-width: 0 1px; color: #666; }
.vscroll.plain { border: 0; }
.thumb { width: 6px; height: 25px; margin-top: 1px; background: #fff; border: 1px solid #ccc; margin-bottom: auto; }
.thumb.long { height: 35px; }
.sheettabs { height: 8px; flex: none; display: flex; align-items: center; gap: 3px; padding: 0 6px 0 2px; background: #efefef; color: #999; font: 5px/6px "Liberation Sans", Arial, sans-serif; }
.stab { color: #444; padding: 0 2px; height: 7px; border: 1px solid #888; border-top: 0; border-radius: 0 0 3px 3px; margin-right: -3px; }
.stab.on { background: #fff; font-weight: 700; }
.stab + svg { margin-left: 5px; }
.far { margin-left: auto; }

.side { display: flex; flex-direction: column; gap: 2px; min-width: 0; min-height: 0; }
.properties { flex: 1; background: #efefef; }
.properties .tabs { background: #fff; }
.ptools { height: 15px; flex: none; display: flex; align-items: center; gap: 2px; padding: 0 3px 0 2px; background: #f5f7fc; }
.ptools .box { width: 12px; height: 11px; }
.az { width: 12px; height: 11px; background: #2455a4; color: #fff; }
.psearch { flex: 1; height: 11px; display: flex; align-items: center; padding-right: 2px; background: #fff; border: 1px solid #c8c8c8; }
.psearch input { flex: 1; }
.pgrid { display: flex; border-top: 1px solid #c9c9c9; border-bottom: 1px solid #c9c9c9; }
.gutter { width: 13px; flex: none; background: #ececec; }
.ptable { flex: 1; table-layout: fixed; border-collapse: separate; border-spacing: 0; background: #fff; color: #666; }
.ptable th { width: 80px; height: 12px; padding: 0 0 0 1px; text-align: left; font-weight: 400; border: 1px solid #c9c9c9; border-width: 0 0 1px 1px; white-space: nowrap; }
.ptable td { height: 12px; padding: 0 2px; border: 1px solid #bcbcbc; box-shadow: inset 0 0 0 1px #dcdcdc; }
.ptable tr:nth-child(3n) > * { height: 11px; }
.bookmarks { height: 100px; flex: none; }
.bbody { flex: 1; display: flex; justify-content: space-between; padding: 1px 1px 0 0; }
.tree { font-size: 6px; padding-left: 4px; }
.tree li { display: flex; align-items: center; height: 11px; gap: 2px; }
.tree li > .folder { margin-left: 1px; margin-right: 1px; }
.tree .sub { padding-left: 14px; }
.tri { width: 4px; height: 4px; }
.folder { width: 8px; height: 6px; color: #222; }
.comments { width: 195px; height: 34px; margin: 0; padding: 0 1px 2px; border: 1px solid #ccc; min-width: 0; }
.comments legend { margin-left: 1px; padding: 0 1px; line-height: 6px; color: #777; }
.comments textarea { display: block; width: 100%; height: 25px; border: 1px solid #ccc; background: #fff; resize: none; }
.kb { width: 12px; height: 9px; }
.kb svg { width: 8px; height: 5px; }
.save { width: 24px; height: 10px; margin-left: auto; gap: 3px; background: #e7e7e7; border: 1px solid #d0d0d0; border-radius: 2px; color: #c3c3c3; }
.refresh { width: 26px; height: 10px; gap: 1px; }
.refresh svg { color: #0b1e3c; }

.itemlist { flex: none; margin: 0 2px; background: #fff; border: 1px solid #c3cde0; border-width: 0 1px 1px 0; }
.ihead { height: 10px; display: flex; align-items: center; justify-content: space-between; padding: 0 2px 0 1px; background: #2556a0; color: #d7e3f5; }
.ihead .head-icons { color: #fff; }
.itools { height: 11px; display: flex; align-items: center; gap: 2px; padding-left: 2px; }
.itools .box { width: 10px; }
.igrid { display: flex; border-top: 1px solid #ccc; border-bottom: 1px solid #ccc; }
.items { flex: 1; min-width: 0; width: 100%; table-layout: fixed; border-collapse: separate; border-spacing: 0; }
.items th, .items td { height: 12px; padding: 0 0 0 1px; border-right: 1px solid #d0d0d0; border-bottom: 1px solid #cfcfcf; text-align: left; white-space: nowrap; overflow: hidden; }
.items thead th { height: 13px; background: #f0f0f0; font-weight: 700; color: #444; }
.items .w-mark { width: 13px; border-right: 2px solid #555; }
.items .mark { border-right: 2px solid #555; padding-left: 3px; }
.items .w-check { width: 10px; vertical-align: top; }
.w-row { width: 17px; }
.w-type { width: 91px; }
.w-created { width: 54px; }
.w-ext { width: 33px; }
.w-labels { width: 25px; }
.w-updated { width: 51px; }
.w-size { width: 43px; }
.w-md5 { width: 91px; }
.w-id { width: 32px; }
.w-name { width: 103px; }
.items thead th.sorted { background: #17479a; color: #fff; }
.th { display: flex; align-items: center; gap: 2px; padding-right: 3px; }
.push { margin-left: auto; }
.items input { appearance: none; display: block; width: 6px; height: 6px; border: 1px solid #777; background: #fff; }
.ft { display: flex; align-items: center; gap: 4px; padding-left: 1px; }
.xls { width: 6px; height: 7px; }
.picked td { background: #e0e0e0; }
.items td.focus { box-shadow: inset 0 0 0 1px #6f8fc4; }
.pager { height: 12px; display: flex; align-items: center; gap: 2px; padding: 0 1px 0 2px; }
.dark { color: #222; }
.faint { color: #999; }
.sel.grey { width: 29px; background: #e9e9e9; height: 10px; }
.pager button { width: 7px; color: #333; }
.pager .sep { border-left: 1px solid #ccc; padding-left: 2px; width: auto; }
#page { width: 20px; height: 9px; border: 1px solid #ccc; padding-left: 1px; }
.pager .fbtn { margin-left: auto; width: 7px; height: 11px; }
.sel.qc { width: 47px; }

.taskbar { position: relative; height: 19px; flex: none; margin-top: 1px; display: flex; align-items: center; justify-content: center; background: #202020; color: #ddd; }
.apps { width: 156px; display: flex; justify-content: space-between; }
.apps button { position: relative; width: 16px; height: 16px; }
.apps svg { width: 11px; height: 11px; }
.apps i { position: absolute; left: 7px; bottom: 0; width: 2px; height: 1px; background: #999; }
.apps .lit { left: 5px; width: 6px; background: #ccc; }
.apps .active { background: #303030; border-radius: 2px; }
.tray { position: absolute; right: 8px; top: 0; height: 19px; display: flex; align-items: center; gap: 3px; }
.tray svg { width: 7px; height: 7px; }
.clock { display: flex; flex-direction: column; align-items: flex-end; width: 26px; line-height: 6px; color: #eee; }
</style>
